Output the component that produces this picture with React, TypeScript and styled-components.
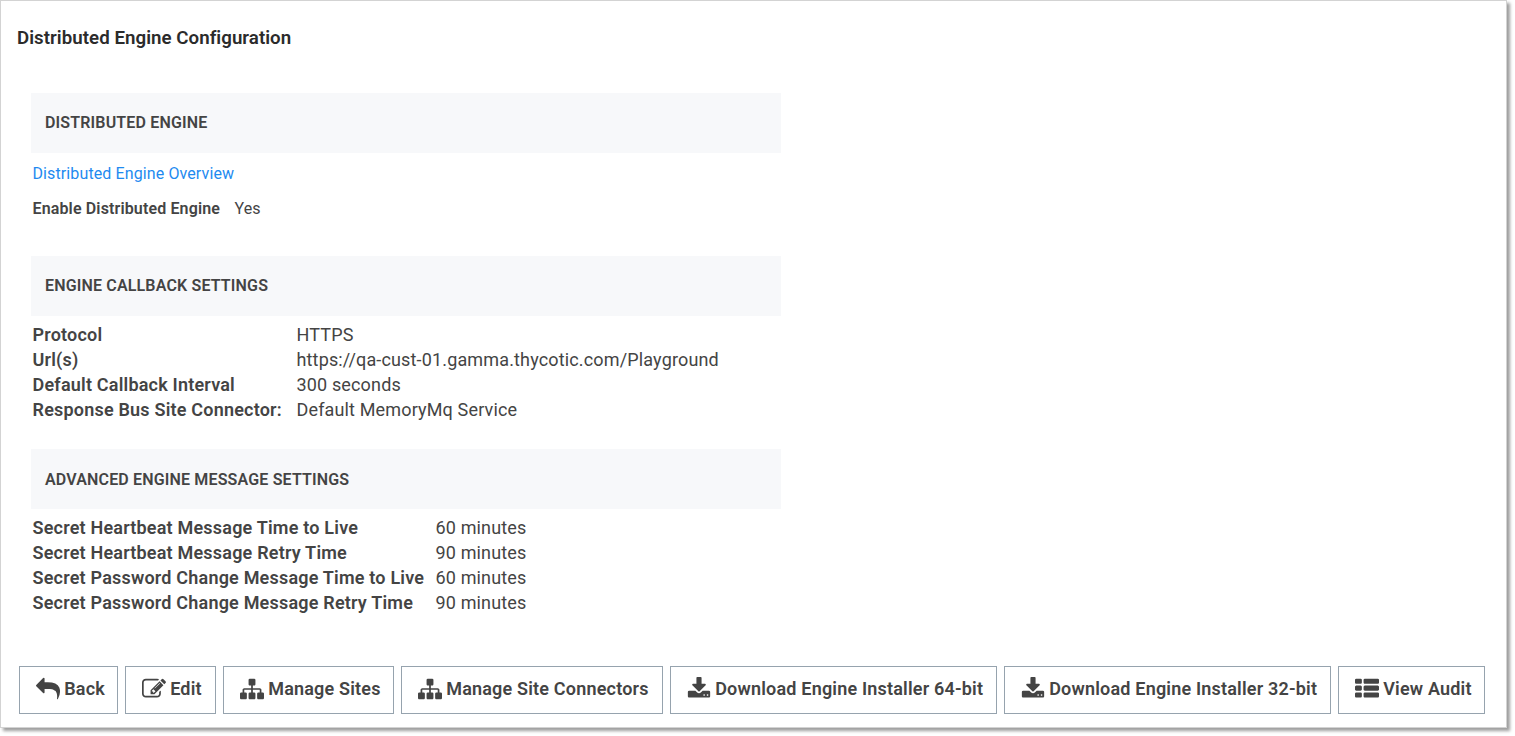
import React from "react";
import styled, { createGlobalStyle } from "styled-components";

const GlobalStyle = createGlobalStyle`
  * { box-sizing: border-box; }
  body {
    margin: 0;
    min-height: 736px;
    background: #fff;
    color: #444;
    font-family: Roboto, "Liberation Sans", sans-serif;
  }
`;

const Panel = styled.main`
  width: 1507px;
  height: 728px;
  padding: 24px 16px 0;
  display: flex;
  flex-direction: column;
  background: #fff;
  border: 1px solid #d3d3d3;
  box-shadow: 3px 3px 3px rgba(0, 0, 0, 0.38);
`;

const Title = styled.h1`
  margin: 0;
  font-size: 18.7px;
  line-height: 26px;
  font-weight: 600;
  letter-spacing: 0.04px;
  color: #2b2b2b;
`;

const Sections = styled.div`
  width: 750px;
  margin: 42px 0 0 14px;
`;

const SectionHeader = styled.h2<{ $raised?: boolean }>`
  display: flex;
  align-items: center;
  height: 60px;
  margin: 0;
  padding: 0 14px ${(p) => (p.$raised ? 2 : 0)}px;
  background: #f7f8fa;
  font-size: 16px;
  font-weight: 600;
  letter-spacing: 0.16px;
  text-transform: uppercase;
`;

const Overview = styled.div`
  height: 103px;
  padding: 11px 1.5px 0;
  font-size: 16px;
  line-height: 20px;
  letter-spacing: 0.11px;
`;

const OverviewLink = styled.a`
  display: block;
  width: max-content;
  color: #1e8af0;
  text-decoration: none;
`;

const EnableRow = styled.div`
  display: flex;
  gap: 14.5px;
  margin-top: 15px;
`;

const EnableLabel = styled.span`
  font-weight: 600;
  letter-spacing: 0.14px;
`;

const Settings = styled.dl<{ $labelWidth: number; $height: number }>`
  display: grid;
  grid-template-columns: ${(p) => p.$labelWidth}px max-content;
  align-content: start;
  height: ${(p) => p.$height}px;
  margin: 0;
  padding: 6px 1.5px 0;
  font-size: 18px;
  line-height: 25px;
  letter-spacing: 0.15px;
  white-space: nowrap;
`;

const Label = styled.dt`
  font-weight: 600;
  letter-spacing: 0.2px;
`;

const Value = styled.dd`
  margin: 0;
`;

const Actions = styled.footer`
  display: flex;
  gap: 7px;
  margin: 24px 0 0 2px;
`;

const ActionButton = styled.button<{ $width: number }>`
  display: flex;
  align-items: center;
  gap: 4px;
  width: ${(p) => p.$width}px;
  height: 48px;
  padding: 0 0 3px 16.2px;
  background: #fff;
  border: 1px solid #96a3ae;
  color: #444;
  font-family: inherit;
  font-size: 18px;
  font-weight: 600;
  letter-spacing: 0.19px;
  white-space: nowrap;
`;

const Glyph = styled.svg`
  flex: none;
  width: 24px;
  height: 24px;
  margin-top: 1px;
  fill: currentColor;
`;

const icons = {
  reply:
    "M1792 1120q0 166-127 451-3 7-10.5 24t-13.5 30-13 22q-12 17-28 17-15 0-23.5-10t-8.5-25q0-9 2.5-26.5t2.5-23.5q5-68 5-123 0-101-17.5-181t-48.5-138.5-80-101-105.5-69.5-133-42.5-154-21.5-175.5-6h-224v256q0 26-19 45t-45 19-45-19l-512-512q-19-19-19-45t19-45l512-512q19-19 45-19t45 19 19 45v256h224q713 0 875 403 53 134 53 333z",
  edit: "M888 1184l116-116-152-152-116 116v56h96v96h56zm440-720q-16-16-33 1l-350 350q-17 17-1 33t33-1l350-350q17-17 1-33zm80 594v190q0 119-84.5 203.5t-203.5 84.5h-832q-119 0-203.5-84.5t-84.5-203.5v-832q0-119 84.5-203.5t203.5-84.5h832q63 0 117 25 15 7 18 23 3 17-9 29l-49 49q-14 14-32 8-23-6-45-6h-832q-66 0-113 47t-47 113v832q0 66 47 113t113 47h832q66 0 113-47t47-113v-126q0-13 9-22l64-64q15-15 35-7t20 29zm-96-738l288 288-672 672h-288v-288zm444 132l-92 92-288-288 92-92q28-28 68-28t68 28l152 152q28 28 28 68t-28 68z",
  sitemap:
    "M1792 1248v320q0 40-28 68t-68 28h-320q-40 0-68-28t-28-68v-320q0-40 28-68t68-28h96v-192h-512v192h96q40 0 68 28t28 68v320q0 40-28 68t-68 28h-320q-40 0-68-28t-28-68v-320q0-40 28-68t68-28h96v-192h-512v192h96q40 0 68 28t28 68v320q0 40-28 68t-68 28h-320q-40 0-68-28t-28-68v-320q0-40 28-68t68-28h96v-192q0-52 38-90t90-38h512v-192h-96q-40 0-68-28t-28-68v-320q0-40 28-68t68-28h320q40 0 68 28t28 68v320q0 40-28 68t-68 28h-96v192h512q52 0 90 38t38 90v192h96q40 0 68 28t28 68z",
  download:
    "M1344 1344q0-26-19-45t-45-19-45 19-19 45 19 45 45 19 45-19 19-45zm256 0q0-26-19-45t-45-19-45 19-19 45 19 45 45 19 45-19 19-45zm128-224v320q0 40-28 68t-68 28h-1472q-40 0-68-28t-28-68v-320q0-40 28-68t68-28h465l135 136q58 56 136 56t136-56l136-136h464q40 0 68 28t28 68zm-325-569q17 41-14 70l-448 448q-18 19-45 19t-45-19l-448-448q-31-29-14-70 17-39 59-39h256v-448q0-26 19-45t45-19h256q26 0 45 19t19 45v448h256q42 0 59 39z",
  list: [256, 768, 1280]
    .map((y) =>
      [
        `M96 ${y - 128}h320q40 0 68 28t28 68v192q0 40-28 68t-68 28h-320q-40 0-68-28t-28-68v-192q0-40 28-68t68-28z`,
        `M736 ${y - 128}h960q40 0 68 28t28 68v192q0 40-28 68t-68 28h-960q-40 0-68-28t-28-68v-192q0-40 28-68t68-28z`,
      ].join("")
    )
    .join(""),
};

type IconName = keyof typeof icons;

const Icon = ({ name }: { name: IconName }) => (
  <Glyph viewBox="0 0 1792 1792" aria-hidden="true">
    <path d={icons[name]} />
  </Glyph>
);

const callbackSettings = [
  ["Protocol", "HTTPS"],
  ["Url(s)", "https://qa-cust-01.gamma.thycotic.com/Playground"],
  ["Default Callback Interval", "300 seconds"],
  ["Response Bus Site Connector:", "Default MemoryMq Service"],
];

const messageSettings = [
  ["Secret Heartbeat Message Time to Live", "60 minutes"],
  ["Secret Heartbeat Message Retry Time", "90 minutes"],
  ["Secret Password Change Message Time to Live", "60 minutes"],
  ["Secret Password Change Message Retry Time", "90 minutes"],
];

const actions: { icon: IconName; label: string; width: number }[] = [
  { icon: "reply", label: "Back", width: 99 },
  { icon: "edit", label: "Edit", width: 91 },
  { icon: "sitemap", label: "Manage Sites", width: 171 },
  { icon: "sitemap", label: "Manage Site Connectors", width: 262 },
  { icon: "download", label: "Download Engine Installer 64-bit", width: 327 },
  { icon: "download", label: "Download Engine Installer 32-bit", width: 327 },
  { icon: "list", label: "View Audit", width: 147 },
];

const SettingsList = ({ rows, labelWidth, height }: { rows: string[][]; labelWidth: number; height: number }) => (
  <Settings $labelWidth={labelWidth} $height={height}>
    {rows.map(([label, value]) => (
      <React.Fragment key={label}>
        <Label>{label}</Label>
        <Value>{value}</Value>
      </React.Fragment>
    ))}
  </Settings>
);

export default function App() {
  return (
    <>
      <GlobalStyle />
      <Panel>
        <Title>Distributed Engine Configuration</Title>
        <Sections>
          <SectionHeader $raised>Distributed Engine</SectionHeader>
          <Overview>
            <OverviewLink href="#">Distributed Engine Overview</OverviewLink>
            <EnableRow>
              <EnableLabel>Enable Distributed Engine</EnableLabel>
              <span>Yes</span>
            </EnableRow>
          </Overview>
          <SectionHeader $raised>Engine Callback Settings</SectionHeader>
          <SettingsList rows={callbackSettings} labelWidth={264} height={133} />
          <SectionHeader>Advanced Engine Message Settings</SectionHeader>
          <SettingsList rows={messageSettings} labelWidth={403} height={133} />
        </Sections>
        <Actions>
          {actions.map(({ icon, label, width }) => (
            <ActionButton key={label} $width={width}>
              <Icon name={icon} />
              <span>{label}</span>
            </ActionButton>
          ))}
        </Actions>
      </Panel>
    </>
  );
}
